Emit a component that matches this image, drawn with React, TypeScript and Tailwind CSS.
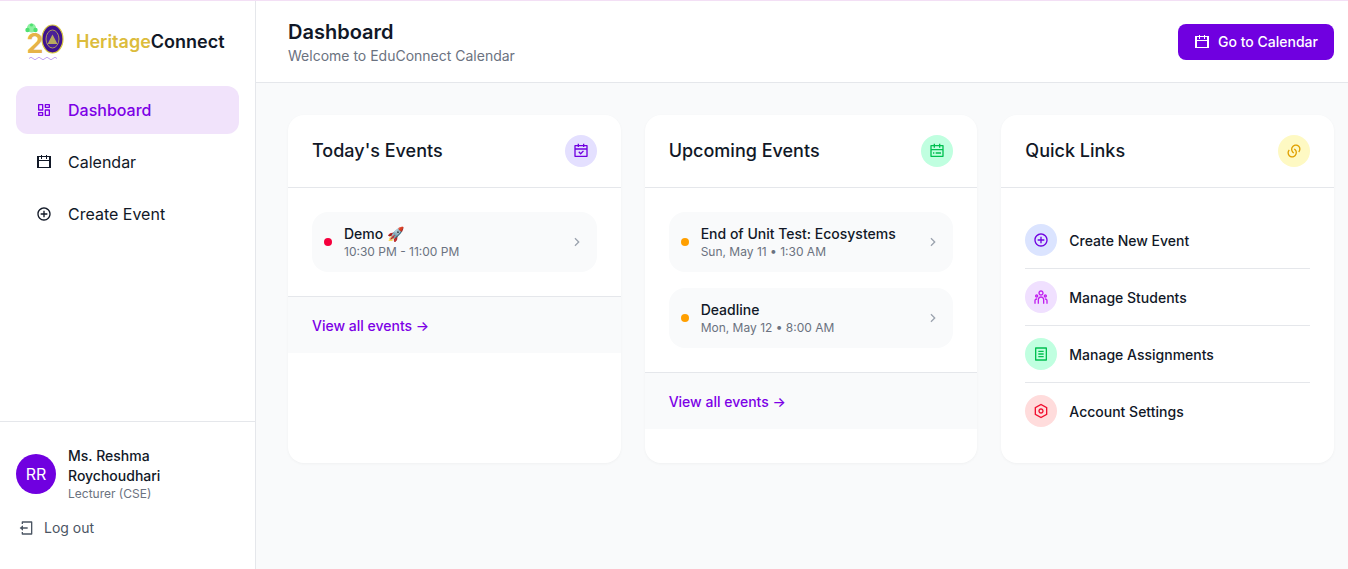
import type { ReactNode } from "react";
import {
  RiAddCircleLine,
  RiArrowRightSLine,
  RiCalendarCheckLine,
  RiCalendarLine,
  RiCalendarTodoLine,
  RiDashboardLine,
  RiFileListLine,
  RiLinksLine,
  RiLogoutBoxLine,
  RiSettingsLine,
  RiTeamLine,
} from "react-icons/ri";

type EventItem = { title: string; time: string; dot: string };

const today: EventItem[] = [{ title: "Demo 🚀", time: "10:30 PM - 11:00 PM", dot: "bg-[#f5003d]" }];
const upcoming: EventItem[] = [
  { title: "End of Unit Test: Ecosystems", time: "Sun, May 11 • 1:30 AM", dot: "bg-[#ff9f00]" },
  { title: "Deadline", time: "Mon, May 12 • 8:00 AM", dot: "bg-[#ff9f00]" },
];

function Logo() {
  return (
    <svg width="44" height="40" viewBox="0 0 44 40" className="shrink-0">
      {/* tree */}
      <circle cx="7.5" cy="6" r="4.5" fill="#8cf0a0" />
      <circle cx="3.5" cy="8" r="2.2" fill="#4fe070" />
      <circle cx="11.5" cy="8" r="2.2" fill="#4fe070" />
      <circle cx="7.5" cy="3" r="1.6" fill="#4fe070" />
      <text x="2.5" y="30.5" fontSize="27" fontWeight="700" fill="#e6b348" fontFamily="Inter, sans-serif">
        2
      </text>
      {/* seal */}
      <ellipse cx="28.5" cy="17" rx="10.5" ry="14" fill="#3d1190" stroke="#d8c840" strokeWidth="1.2" />
      <ellipse cx="28.5" cy="17" rx="6.5" ry="9" fill="#4a2098" stroke="#c4b650" strokeWidth="0.8" />
      <path d="M23.5 22 L28.5 12.5 L33.5 22 Z" fill="#b8a95f" />
      <path d="M5 36.5 q2 -2.5 4 0 t4 0 t4 0 t4 0 t4 0 t4 0 t4 0" fill="none" stroke="#b48cf0" strokeWidth="0.8" />
    </svg>
  );
}

function Card({ title, icon, children }: { title: string; icon: ReactNode; children: ReactNode }) {
  return (
    <div className="h-[348px] overflow-hidden rounded-2xl bg-white shadow-[0_1px_3px_rgba(0,0,0,0.04)]">
      <div className="flex h-[73px] items-center justify-between border-b border-[#e5e7eb] px-6">
        <h2 className="text-lg font-medium text-[#111827]">{title}</h2>
        {icon}
      </div>
      {children}
    </div>
  );
}

function EventList({ items }: { items: EventItem[] }) {
  return (
    <>
      <div className="flex flex-col gap-4 p-6">
        {items.map((item) => (
          <div key={item.title} className="flex h-[60px] items-center rounded-2xl bg-[#f9fafb] pl-3 pr-3">
            <span className={`h-2 w-2 rounded-full ${item.dot}`} />
            <div className="ml-3 flex-1">
              <div className="text-sm leading-5 font-medium text-[#111827]">{item.title}</div>
              <div className="text-xs leading-4 text-[#6b7280]">{item.time}</div>
            </div>
            <RiArrowRightSLine className="text-[#9ca3af]" size={16} />
          </div>
        ))}
      </div>
      <div className="flex h-[57px] items-center border-t border-[#e5e7eb] bg-[#f9fafb] px-6 pt-[2px] text-sm font-medium text-[#7c00e6]">
        View all events →
      </div>
    </>
  );
}

const links = [
  { label: "Create New Event", Icon: RiAddCircleLine, tint: "bg-[#dbe4ff] text-[#7000e0]" },
  { label: "Manage Students", Icon: RiTeamLine, tint: "bg-[#f0e0ff] text-[#c020f0]" },
  { label: "Manage Assignments", Icon: RiFileListLine, tint: "bg-[#c0ffe0] text-[#00c050]" },
  { label: "Account Settings", Icon: RiSettingsLine, tint: "bg-[#ffdcdc] text-[#f01030]" },
];

export default function App() {
  return (
    <div className="flex h-[569px] border-t border-[#f3dff5] bg-[#f9fafb] font-['Inter',sans-serif]">
      <aside className="flex w-[256px] shrink-0 flex-col border-r border-[#e5e7eb] bg-white">
        <div className="flex h-[73px] items-center gap-2 pl-6 pt-2">
          <Logo />
          <span className="text-lg font-semibold">
            <span className="text-[#dcbc3c]">Heritage</span>
            <span className="text-[#111827]">Connect</span>
          </span>
        </div>
        <nav className="mt-3 flex flex-1 flex-col gap-1 px-4">
          <a className="flex h-12 items-center gap-4 rounded-xl bg-[#f1e3fb] px-5 font-medium text-[#7c00e6]">
            <RiDashboardLine size={16} />
            Dashboard
          </a>
          <a className="flex h-12 items-center gap-4 px-5 text-[#111827]">
            <RiCalendarLine size={16} className="[shape-rendering:crispEdges]" />
            Calendar
          </a>
          <a className="flex h-12 items-center gap-4 px-5 text-[#111827]">
            <RiAddCircleLine size={16} />
            Create Event
          </a>
        </nav>
        <div className="h-[148px] border-t border-[#e5e7eb] px-4 pt-6">
          <div className="flex items-center gap-3">
            <div className="flex h-10 w-10 shrink-0 items-center justify-center rounded-full bg-[#7000e0] text-white">
              RR
            </div>
            <div>
              <div className="text-sm leading-5 font-medium text-[#111827]">Ms. Reshma Roychoudhari</div>
              <div className="text-xs leading-4 text-[#6b7280]">Lecturer (CSE)</div>
            </div>
          </div>
          <div className="mt-4 flex items-center gap-[9px] pl-[3px] text-sm leading-5 text-[#4b5563]">
            <RiLogoutBoxLine size={16} />
            Log out
          </div>
        </div>
      </aside>
      <div className="flex min-w-0 flex-1 flex-col">
        <header className="flex h-[82px] shrink-0 items-center justify-between border-b border-[#e5e7eb] bg-white pl-8 pr-[14px]">
          <div>
            <h1 className="text-xl leading-7 font-semibold text-[#111827]">Dashboard</h1>
            <p className="text-sm leading-5 text-[#6b7280]">Welcome to EduConnect Calendar</p>
          </div>
          <button className="flex h-9 w-[156px] items-center justify-center gap-2 rounded-lg bg-[#7000e0] text-sm font-medium text-white">
            <RiCalendarLine size={16} className="[shape-rendering:crispEdges]" />
            Go to Calendar
          </button>
        </header>
        <main className="grid grid-cols-3 gap-6 pl-8 pr-[14px] pt-8">
          <Card
            title="Today's Events"
            icon={
              <span className="flex h-8 w-8 items-center justify-center rounded-full bg-[#e4e0ff] text-[#7000e0]">
                <RiCalendarCheckLine size={16} />
              </span>
            }
          >
            <EventList items={today} />
          </Card>
          <Card
            title="Upcoming Events"
            icon={
              <span className="flex h-8 w-8 items-center justify-center rounded-full bg-[#c0ffe0] text-[#00c050]">
                <RiCalendarTodoLine size={16} />
              </span>
            }
          >
            <EventList items={upcoming} />
          </Card>
          <Card
            title="Quick Links"
            icon={
              <span className="flex h-8 w-8 items-center justify-center rounded-full bg-[#fef9c3] text-[#e0a000]">
                <RiLinksLine size={16} />
              </span>
            }
          >
            <div className="px-6 py-6">
              {links.map(({ label, Icon, tint }, i) => (
                <div
                  key={label}
                  className={`flex h-[57px] items-center gap-3 border-b ${i < links.length - 1 ? "border-[#e5e7eb]" : "border-transparent"}`}
                >
                  <span className={`flex h-8 w-8 items-center justify-center rounded-full ${tint}`}>
                    <Icon size={16} />
                  </span>
                  <span className="pt-[2px] text-sm font-medium text-[#111827]">{label}</span>
                </div>
              ))}
            </div>
          </Card>
        </main>
      </div>
    </div>
  );
}
